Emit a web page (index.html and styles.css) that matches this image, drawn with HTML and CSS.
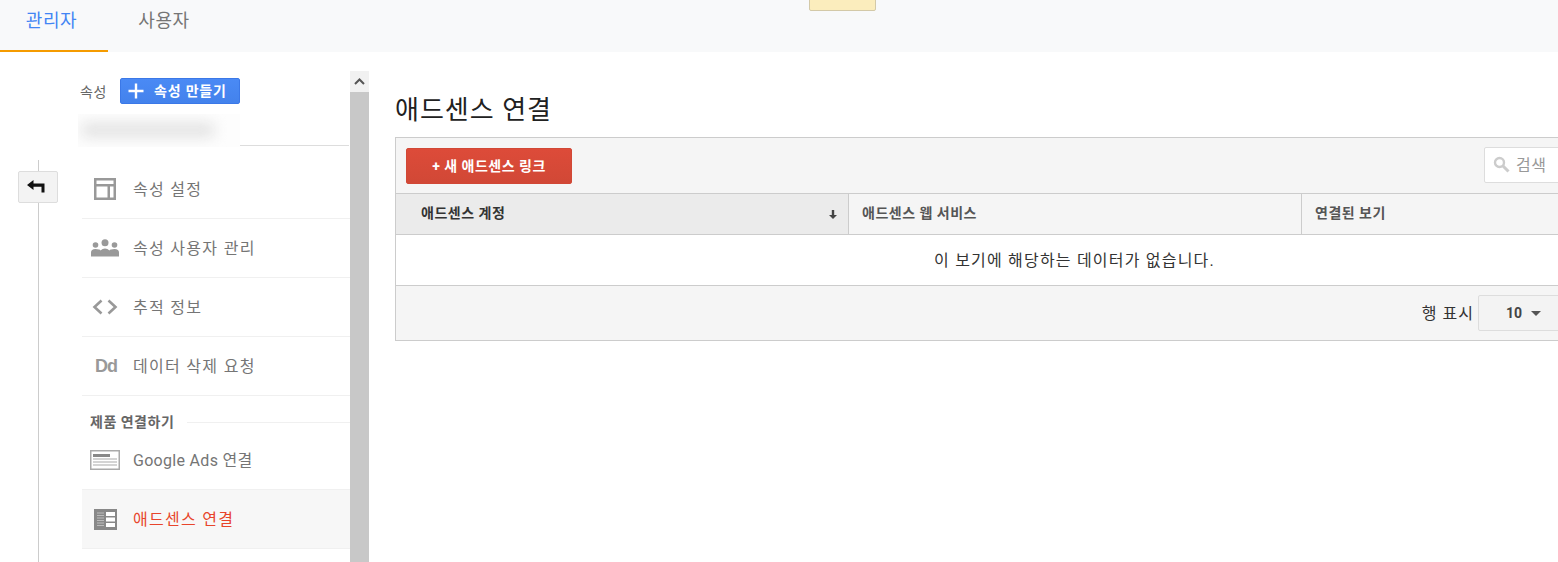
FILE: index.html
```html
<!DOCTYPE html>
<html lang="ko">
<head>
<meta charset="utf-8">
<title>애드센스 연결</title>
<link rel="stylesheet" href="styles.css">
</head>
<body>
<header class="topbar">
  <a class="tab tab-active">관리자</a>
  <a class="tab tab-user">사용자</a>
  <div class="notice"></div>
</header>
<div class="workspace">
  <div class="rail">
    <button class="back" aria-label="뒤로">
      <svg width="18" height="13" viewBox="0 0 18 13"><path d="M0 5 L6.500 0 V3.500 H17.500 V12.500 H14.500 V6.800 H6.500 V10 Z" fill="#111"/></svg>
    </button>
  </div>
  <aside class="sidebar">
    <div class="side-scroll">
      <div class="prop-head">
        <span class="prop-label">속성</span>
        <button class="create">
          <svg width="16" height="16" viewBox="0 0 16 16"><path d="M6.800 0.500h2.400v6.300h6.300v2.400H9.200v6.300H6.800V9.200H0.500V6.800h6.300z" fill="#fff"/></svg>
          <span>속성 만들기</span>
        </button>
      </div>
      <div class="prop-select"><div class="smudge"></div></div>
      <nav class="nav nav-first">
        <a class="row">
          <span class="ico"><svg width="24" height="24" viewBox="0 0 24 24"><path d="M1 1h22v22H1z M3.500 3.500v3.500h17v-3.500z M3.500 9.500v11h11v-11z M17 9.500v11h3.500v-11z" fill="#999" fill-rule="evenodd"/></svg></span>
          <span class="row-text">속성 설정</span>
        </a>
        <a class="row">
          <span class="ico"><svg width="30" height="18" viewBox="0 0 30 18"><g fill="#999"><circle cx="15" cy="3.800" r="3.500"/><circle cx="5.500" cy="6" r="2.800"/><circle cx="24.500" cy="6" r="2.800"/><path d="M1 17.500v-4q0-3.500 4.500-3.500t5 1.500q2-2 4.500-2t4.500 2q.5-1.500 5-1.500t4.500 3.500v4z"/></g></svg></span>
          <span class="row-text">속성 사용자 관리</span>
        </a>
        <a class="row">
          <span class="ico"><svg width="26" height="16" viewBox="0 0 26 16"><path d="M9.500 1.500L2.500 8l7 6.500 M16.500 1.500l7 6.500-7 6.500" fill="none" stroke="#999" stroke-width="2.600"/></svg></span>
          <span class="row-text">추적 정보</span>
        </a>
        <a class="row">
          <span class="ico ico-dd">Dd</span>
          <span class="row-text">데이터 삭제 요청</span>
        </a>
      </nav>
      <div class="section"><span>제품 연결하기</span><i></i></div>
      <nav class="nav">
        <a class="row">
          <span class="ico"><svg width="30" height="20" viewBox="0 0 30 20"><path d="M0 0h30v20H0z M1.500 1.500v17h27v-17z" fill="#aaa" fill-rule="evenodd"/><path d="M3 4h17v3H3z" fill="#888"/><path d="M3 8.500h24v1H3z M3 11.500h24v1H3z M3 14.500h24v1H3z" fill="#aaa"/></svg></span>
          <span class="row-text row-text-latin">Google Ads 연결</span>
        </a>
        <a class="row row-active">
          <span class="ico"><svg width="23" height="21" viewBox="0 0 23 21"><path d="M0 0h23v21H0z" fill="#888"/><path d="M12 3h9v4h-9z M12 8.500h9v4h-9z M12 14h9v4h-9z" fill="#fff"/><path d="M3 3.500h7v1H3z M3 6h7v1H3z M3 8.500h7v1H3z M3 11h7v1H3z M3 13.500h7v1H3z M3 16h7v1H3z" fill="#bbb"/></svg></span>
          <span class="row-text">애드센스 연결</span>
        </a>
      </nav>
    </div>
    <div class="scrollbar">
      <div class="scroll-up"><svg width="11" height="7" viewBox="0 0 11 7"><path d="M1 6l4.500-4.500L10 6" fill="none" stroke="#555" stroke-width="2"/></svg></div>
      <div class="scroll-thumb"></div>
    </div>
  </aside>
  <main class="main">
    <h1 class="title">애드센스 연결</h1>
    <section class="panel">
      <div class="toolbar">
        <button class="add">+ 새 애드센스 링크</button>
        <div class="search">
          <svg width="17" height="17" viewBox="0 0 17 17"><circle cx="6.500" cy="6.500" r="4.500" fill="none" stroke="#ccc" stroke-width="2.400"/><path d="M10 10l5.500 5.500" stroke="#ccc" stroke-width="3"/></svg>
          <span>검색</span>
        </div>
      </div>
      <div class="thead">
        <div class="th th-sorted"><span>애드센스 계정</span>
          <svg width="8" height="9" viewBox="0 0 8 9"><path d="M2.800 0h2.400v5H8L4 9 0 5h2.800z" fill="#444"/></svg>
        </div>
        <div class="th">애드센스 웹 서비스</div>
        <div class="th">연결된 보기</div>
      </div>
      <div class="empty">이 보기에 해당하는 데이터가 없습니다.</div>
      <div class="tfoot">
        <span class="rows-label">행 표시</span>
        <div class="rows-select"><b>10</b><i class="caret"></i></div>
      </div>
    </section>
  </main>
</div>
</body>
</html>
```
FILE: styles.css
```css
* { box-sizing: border-box; }
html, body { margin: 0; padding: 0; height: 562px; overflow: hidden; background: #fff; }
body { font-family: Roboto, "Noto Sans CJK KR", sans-serif; font-size: 14px; color: #333; }
button { font-family: inherit; cursor: pointer; }

.topbar { position: relative; display: flex; height: 52px; background: #f8f9fa; }
.tab { width: 108px; height: 52px; padding-top: 9px; font-size: 18px; line-height: 24px; letter-spacing: 0.600px; text-align: center; color: #757575; }
.tab-active { color: #4285f4; border-bottom: 2px solid #f59b00; padding-right: 5px; }
.tab-user { width: 112px; }
.notice { position: absolute; left: 809px; top: -4px; width: 67px; height: 15px; background: #fbedbd; border: 1px solid #d3c9a8; border-radius: 2px; }

.workspace { display: flex; height: 510px; }

.rail { position: relative; flex: none; width: 82px; }
.rail::before { content: ""; position: absolute; left: 38px; top: 108px; bottom: 0; width: 1px; background: #ccc; }
.back { position: absolute; left: 18px; top: 119px; width: 40px; height: 32px; padding: 0 5px 1px 0; display: flex; align-items: center; justify-content: center; background: #f3f3f3; border: 1px solid #ddd; border-radius: 2px; }

.sidebar { flex: none; display: flex; width: 287px; padding-top: 19px; }
.side-scroll { flex: none; width: 268px; }
.prop-head { display: flex; align-items: center; height: 26px; margin: 7px 0 0 -2px; }
.prop-label { width: 40px; font-size: 14px; letter-spacing: 0.500px; color: #666; }
.create { display: flex; align-items: center; width: 120px; height: 26px; padding: 0 0 2px 7px; color: #fff; font-size: 14px; font-weight: 700; letter-spacing: 0.800px; background: linear-gradient(#4a8af5, #4382ec); border: 1px solid #3b78e7; border-radius: 2px; }
.create svg { margin-top: 2px; }
.create span { margin-left: 10px; }
.prop-select { position: relative; width: 267px; height: 42px; border-bottom: 1px solid #ddd; }
.smudge { position: absolute; left: -4px; top: 10px; width: 162px; height: 33px; background: #fdfdfd; overflow: hidden; }
.smudge::after { content: ""; position: absolute; left: 4px; top: 9px; width: 132px; height: 14px; background: #e2e2e2; filter: blur(7px); }
.nav-first { margin-top: 14px; }
.row { display: flex; align-items: center; height: 59px; border-bottom: 1px solid #f0f0f0; color: #757575; font-size: 16px; letter-spacing: 1.300px; }
.ico { flex: none; display: flex; align-items: center; justify-content: center; width: 46px; margin-right: 5px; letter-spacing: 0; }
.ico-dd { padding-left: 2px; font-size: 18px; font-weight: 700; color: #999; letter-spacing: -1px; font-family: "Liberation Sans", sans-serif; }
.row-text { padding-top: 1px; line-height: 20px; }
.row-text-latin { letter-spacing: 0.300px; }
.row-active { background: #f7f7f7; color: #e8452c; }
.section { display: flex; align-items: center; height: 35px; padding: 15px 0 0 8px; font-size: 14px; font-weight: 700; letter-spacing: 0.500px; color: #666; }
.section i { flex: 1; height: 1px; margin: 3px 0 0 13px; background: #f0f0f0; }

.scrollbar { flex: none; display: flex; flex-direction: column; width: 19px; }
.scroll-up { display: flex; align-items: center; justify-content: center; height: 21px; background: #f1f1f1; }
.scroll-thumb { flex: 1; background: #c8c8c8; }

.main { flex: 1; min-width: 0; overflow: hidden; padding: 40px 0 0 26px; }
.title { margin: 0 0 10px; height: 35px; font-size: 26px; line-height: 37px; font-weight: 400; letter-spacing: 1px; color: #212121; }
.panel { width: 1359px; border: 1px solid #ccc; }
.toolbar { display: flex; align-items: center; justify-content: space-between; height: 56px; padding: 0 183px 0 10px; background: #f5f5f5; border-bottom: 1px solid #ccc; }
.add { width: 166px; height: 36px; padding: 0 0 2px; color: #fff; font-size: 14px; font-weight: 700; letter-spacing: 0.500px; background: linear-gradient(#dd4b39, #d14836); border: 1px solid #d14836; border-radius: 2px; }
.search { display: flex; align-items: center; gap: 6px; width: 86px; height: 36px; padding: 0 0 2px 8px; margin-top: -1px; background: #fff; border: 1px solid #ddd; border-radius: 2px; color: #999; font-size: 16px; letter-spacing: 0.500px; }
.thead { display: grid; grid-template-columns: 453px 453px 1fr; height: 41px; border-bottom: 1px solid #ccc; background: #f5f5f5; }
.th { display: flex; align-items: center; padding: 0 0 5px 13px; font-size: 14px; font-weight: 700; letter-spacing: 0.500px; color: #555; border-right: 1px solid #ccc; }
.th:last-child { border-right: 0; }
.th-sorted { justify-content: space-between; padding: 0 11px 0 25px; background: #ebebeb; color: #333; }
.th-sorted span { padding-bottom: 5px; }
.empty { height: 51px; line-height: 52px; text-align: center; font-size: 16px; letter-spacing: 1.200px; color: #333; background: #fff; border-bottom: 1px solid #ccc; }
.tfoot { display: flex; align-items: center; justify-content: flex-end; height: 54px; padding-right: 183px; background: #f5f5f5; }
.rows-label { margin: 0 4px 3px 0; font-size: 16px; letter-spacing: 1px; color: #333; }
.rows-select { display: flex; align-items: center; width: 92px; height: 36px; padding-left: 27px; background: #f3f3f3; border: 1px solid #ddd; border-radius: 2px; }
.rows-select b { font-size: 14px; color: #444; }
.caret { width: 0; height: 0; margin-left: 9px; border: 5px solid transparent; border-top-color: #555; border-bottom: 0; }
```
